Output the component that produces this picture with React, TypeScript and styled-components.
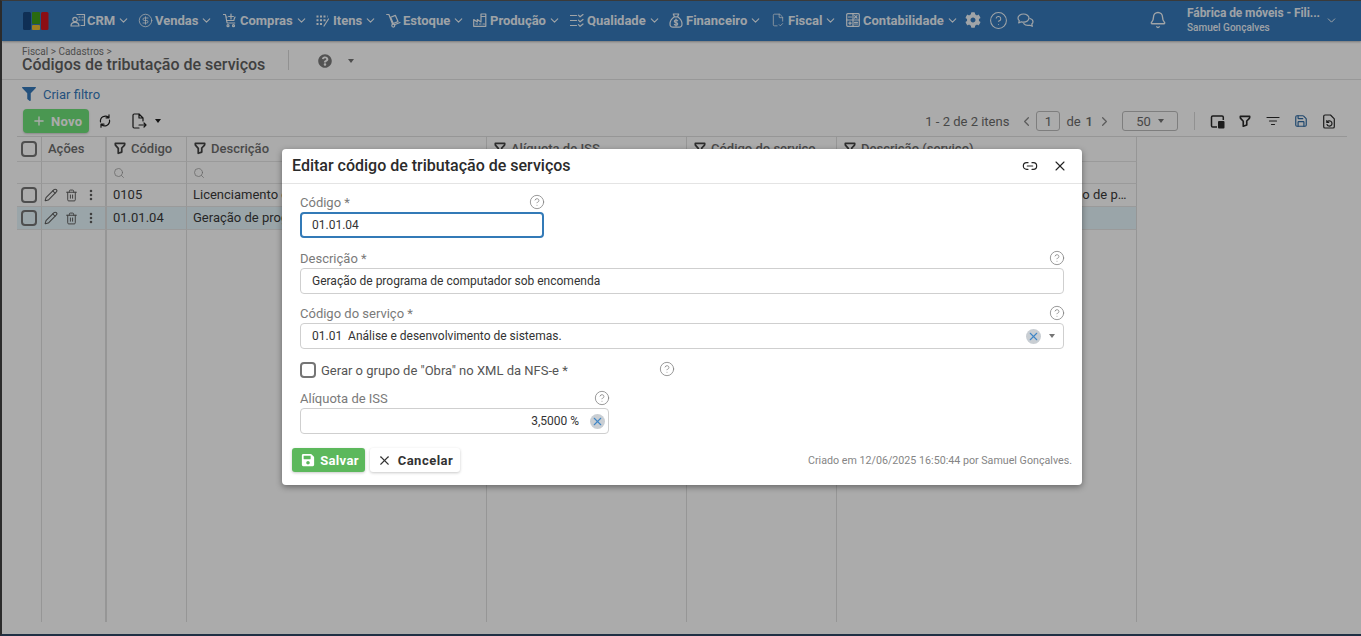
import React from "react";
import styled, { createGlobalStyle } from "styled-components";
import {
  Bell, ChevronDown, ChevronLeft, ChevronRight, CircleDollarSign, CircleHelp,
  FileCheck2, Link2, MoreVertical, Pencil, Save, Search, Trash2, X, Plus,
} from "lucide-react";
import { FaCog, FaFilter, FaQuestionCircle, FaSave } from "react-icons/fa";
import { TbFilter } from "react-icons/tb";

const Global = createGlobalStyle`
  html, body { margin: 0; padding: 0; height: 100%; overflow: hidden; background: #fff; }
  body { font-family: Roboto, "Liberation Sans", sans-serif; }
  * { box-sizing: border-box; }
`;

const Frame = styled.div`
  position: relative;
  width: 1361px;
  height: 636px;
  display: flex;
  flex-direction: column;
  border-top: 1px solid #3a3a3a;
  border-left: 2px solid #2b2b2b;
  border-bottom: 2px solid #1f3044;
  background: #fff;
  overflow: hidden;
`;

const Nav = styled.header`
  height: 40px;
  flex: none;
  display: flex;
  align-items: center;
  background: #367abb;
  box-shadow: 0 1px 2px rgba(0, 0, 0, 0.3);
  color: rgba(255, 255, 255, 0.92);
  padding: 0 0 2px 21px;
`;

const Logo = styled.svg`
  width: 26px;
  height: 20px;
  flex: none;
  margin: 2px 21px 0 0;
`;

const NavItem = styled.div<{ $w: number }>`
  width: ${(p) => p.$w}px;
  flex: none;
  display: flex;
  align-items: center;
  font-size: 13px;
  font-weight: 700;
  white-space: nowrap;
`;

const NavIconSlot = styled.span`
  width: 17px;
  flex: none;
  display: flex;
  align-items: center;
`;

const NavChevron = styled(ChevronDown)`
  margin-left: 2px;
  flex: none;
`;

const NavIconBtn = styled.div<{ $w: number }>`
  width: ${(p) => p.$w}px;
  flex: none;
  display: flex;
  align-items: center;
`;

const NavHelp = styled(CircleHelp)`
  margin-left: -2px;
  flex: none;
`;

const Tenant = styled.div`
  margin-left: 115px;
  flex: none;
  display: flex;
  align-items: center;
`;

const BellWrap = styled.div`
  width: 38px;
  flex: none;
  display: flex;
`;

const User = styled.div`
  width: 138px;
  flex: none;
  display: flex;
  flex-direction: column;
  gap: 2px;
`;

const UserCompany = styled.div`
  font-size: 12px;
  font-weight: 700;
  line-height: 14px;
  letter-spacing: -0.08px;
  white-space: nowrap;
`;

const UserName = styled.div`
  font-size: 10px;
  font-weight: 500;
  line-height: 12px;
`;

const PageHead = styled.div`
  height: 39px;
  flex: none;
  display: flex;
  align-items: center;
  padding-left: 20px;
  border-bottom: 1px solid #e3e3e3;
`;

const TitleBlock = styled.div`
  width: 266px;
  flex: none;
`;

const Crumbs = styled.div`
  font-size: 10px;
  line-height: 10px;
  color: #757575;
`;

const PageTitle = styled.h1`
  margin: 0;
  font-size: 16px;
  font-weight: 500;
  line-height: 16px;
  color: #606060;
  white-space: nowrap;
`;

const VSep = styled.div<{ $h: number; $mx: number }>`
  width: 1px;
  height: ${(p) => p.$h}px;
  flex: none;
  margin: 0 ${(p) => p.$mx}px;
  background: #d8d8d8;
`;

const Caret = styled.span<{ $c?: string }>`
  display: inline-block;
  width: 0;
  height: 0;
  flex: none;
  border-left: 3.5px solid transparent;
  border-right: 3.5px solid transparent;
  border-top: 4px solid ${(p) => p.$c ?? "#757575"};
`;

const SelectCaret = styled(Caret)`
  margin: 0 -3px 0 8px;
`;

const HeadHelp = styled.div`
  display: flex;
  align-items: center;
  gap: 16px;
  color: #7d7d7d;
  margin: 2px 0 0 29px;
`;

const FilterRow = styled.div`
  height: 18px;
  margin-top: 5px;
  flex: none;
  display: flex;
  align-items: center;
  gap: 7px;
  padding-left: 20px;
  font-size: 13px;
  color: #367abb;
`;

const Toolbar = styled.div`
  height: 24px;
  margin-top: 6px;
  flex: none;
  display: flex;
  align-items: center;
  padding-left: 21px;
`;

const NewButton = styled.div`
  width: 66px;
  height: 24px;
  flex: none;
  border-radius: 4px;
  background: #6fe27a;
  color: #fff;
  display: flex;
  align-items: center;
  padding-left: 9px;
  gap: 5px;
  font-size: 13px;
  font-weight: 700;
  letter-spacing: 0.3px;
  box-shadow: 0 1px 2px rgba(0, 0, 0, 0.2);
`;

const ToolIcon = styled.div<{ $ml: number }>`
  margin-left: ${(p) => p.$ml}px;
  display: flex;
  align-items: center;
  gap: 8px;
  flex: none;
  color: #1f1f1f;
`;

const Pager = styled.div`
  margin-left: auto;
  padding-right: 25px;
  display: flex;
  align-items: center;
  font-size: 13px;
  color: #6b6b6b;
`;

const PagerText = styled.span<{ $ml?: number; $strong?: boolean }>`
  margin-left: ${(p) => p.$ml ?? 0}px;
  font-weight: ${(p) => (p.$strong ? 500 : 400)};
  white-space: nowrap;
`;

const PagerBox = styled.div<{ $w: number; $ml: number }>`
  width: ${(p) => p.$w}px;
  height: 20px;
  margin-left: ${(p) => p.$ml}px;
  border: 1px solid #bdbdbd;
  border-radius: 3px;
  display: flex;
  align-items: center;
  justify-content: center;
  gap: 7px;
  flex: none;
`;

const PagerIcon = styled.div<{ $ml: number; $c?: string }>`
  margin-left: ${(p) => p.$ml}px;
  display: flex;
  flex: none;
  color: ${(p) => p.$c ?? "#2a2a2a"};
`;

const TableArea = styled.div`
  margin: 3px 14px 0 15px;
  flex: 1;
  min-height: 0;
  border-top: 1px solid #e0e0e0;
  display: flex;
  flex-direction: column;
  padding-bottom: 12px;
`;

const Row = styled.div<{ $h?: number; $selected?: boolean }>`
  width: 1120px;
  flex: ${(p) => (p.$h ? "none" : "1")};
  height: ${(p) => (p.$h ? `${p.$h}px` : "auto")};
  display: grid;
  grid-template-columns: 25px 65px 80px 300px 200px 150px 300px;
  background: ${(p) => (p.$selected ? "#e6f6fc" : "transparent")};
`;

const Cell = styled.div<{ $lined?: boolean; $heavy?: boolean; $head?: boolean }>`
  min-width: 0;
  display: flex;
  align-items: center;
  gap: 4px;
  padding: 0 6px 2px;
  font-size: 13px;
  color: ${(p) => (p.$head ? "#6e6e6e" : "#3a3a3a")};
  font-weight: ${(p) => (p.$head ? 500 : 400)};
  border-right: ${(p) => (p.$heavy ? "2px" : "1px")} solid #e0e0e0;
  border-bottom: ${(p) => (p.$lined ? "1px solid #e6e6e6" : "none")};
  white-space: nowrap;
  overflow: hidden;
`;

const CheckCell = styled(Cell)`
  padding: 0 0 0 4px;
`;

const SearchCell = styled(Cell)`
  padding: 0 6px;
`;

const ActionCell = styled(Cell)`
  padding: 0 0 0 2px;
  gap: 7px;
  color: #5e5e5e;
`;

const RowMenu = styled(MoreVertical)`
  margin-left: -1px;
  flex: none;
`;

const Ellipsis = styled.span`
  overflow: hidden;
  text-overflow: ellipsis;
`;

const Check = styled.span<{ $clear?: boolean }>`
  display: block;
  width: 16px;
  height: 16px;
  flex: none;
  border: 2px solid #757575;
  border-radius: 4px;
  background: ${(p) => (p.$clear ? "transparent" : "#fff")};
`;

const Overlay = styled.div`
  position: absolute;
  inset: 0;
  background: rgba(0, 0, 0, 0.33);
  padding: 148px 0 0 280px;
`;

const Modal = styled.section`
  width: 800px;
  height: 336px;
  background: #fff;
  border-radius: 4px;
  box-shadow: 0 2px 6px rgba(0, 0, 0, 0.4);
  display: flex;
  flex-direction: column;
`;

const ModalHead = styled.div`
  height: 35px;
  flex: none;
  display: flex;
  align-items: center;
  padding: 0 14px 0 10px;
  border-bottom: 1px solid #e4e4e4;
`;

const ModalTitle = styled.h2`
  margin: 0 0 2px;
  flex: 1;
  font-size: 16px;
  font-weight: 500;
  color: #2b2b2b;
`;

const HeadActions = styled.div`
  display: flex;
  align-items: center;
  gap: 14px;
  color: #222;
`;

const ModalBody = styled.div`
  flex: 1;
  padding: 10px 18px 0;
  display: flex;
  flex-direction: column;
`;

const Field = styled.div<{ $w?: number; $mt?: number }>`
  width: ${(p) => (p.$w ? `${p.$w}px` : "100%")};
  margin-top: ${(p) => p.$mt ?? 0}px;
`;

const LabelRow = styled.div`
  height: 18px;
  padding-bottom: 2px;
  display: flex;
  align-items: center;
  justify-content: space-between;
  font-size: 13px;
  color: #7a7a7a;
`;

const Help = styled(CircleHelp)`
  color: #808080;
  flex: none;
  margin-right: -1px;
`;

const CheckHelp = styled(Help)`
  margin-top: -3px;
`;

const InputBox = styled.div<{ $focus?: boolean; $end?: boolean }>`
  height: 26px;
  display: flex;
  align-items: center;
  justify-content: ${(p) => (p.$end ? "flex-end" : "flex-start")};
  padding: ${(p) => (p.$focus ? "0 10px" : p.$end ? "0 3px 0 11px" : "0 11px")};
  font-size: 12px;
  color: #333;
  border: ${(p) => (p.$focus ? "2px solid #337ab7" : "1px solid #cfcfcf")};
  border-radius: 4px;
  white-space: pre;
`;

const Grow = styled.span`
  flex: 1;
`;

const ClearBadge = styled.span<{ $ml?: number }>`
  width: 15px;
  height: 15px;
  margin-left: ${(p) => p.$ml ?? 0}px;
  flex: none;
  border-radius: 50%;
  background: #c9ced3;
  color: #3f86c6;
  display: flex;
  align-items: center;
  justify-content: center;
`;

const CheckRow = styled.div`
  width: 374px;
  height: 20px;
  margin-top: 11px;
  display: flex;
  align-items: center;
  justify-content: space-between;
  font-size: 13px;
  color: #555;
`;

const CheckLabel = styled.label`
  display: flex;
  align-items: center;
  gap: 5px;
`;

const ModalFoot = styled.div`
  height: 24px;
  margin-bottom: 13px;
  flex: none;
  display: flex;
  align-items: center;
  padding: 0 10px;
`;

const Btn = styled.button<{ $primary?: boolean; $w: number }>`
  width: ${(p) => p.$w}px;
  height: 24px;
  padding: 0 0 0 ${(p) => (p.$primary ? 3 : 0)}px;
  border: 0;
  border-radius: 3px;
  margin-right: 5px;
  display: flex;
  align-items: center;
  justify-content: center;
  gap: ${(p) => (p.$primary ? 5 : 6)}px;
  font: 700 13px Roboto, sans-serif;
  letter-spacing: ${(p) => (p.$primary ? 0.35 : 0.5)}px;
  color: ${(p) => (p.$primary ? "#fff" : "#333")};
  background: ${(p) => (p.$primary ? "#5cb85c" : "#fff")};
  box-shadow: 0 1px 3px rgba(0, 0, 0, 0.22);
`;

const Created = styled.div`
  margin-left: auto;
  font-size: 10.7px;
  color: #858585;
`;

const SearchIcon = styled(Search)`
  color: #9a9a9a;
  flex: none;
`;

/* ---------- drawn icons ---------- */
const IconSvg = styled.svg`
  fill: none;
  stroke: currentColor;
  stroke-width: 1.2;
  stroke-linecap: round;
  stroke-linejoin: round;
  flex: none;
`;

const CrmIcon = () => (
  <IconSvg width="16" height="16" viewBox="0 0 16 16">
    <path d="M7 2.5h7.5v11H11M9 5h1M12 5h1M9 8h1M12 8h1" />
    <circle cx="5" cy="7.5" r="2.2" />
    <path d="M1 14c0-2.5 1.5-3.6 4-3.6s4 1.1 4 3.6z" />
  </IconSvg>
);
const CartIcon = () => (
  <IconSvg width="14" height="15" viewBox="0 0 14 15">
    <path d="M.5 1.5h2l1.6 8.5h7.6M3 4h1M11 6.5 12 4M8 1v5M5.6 3.5h4.8" />
    <path d="M3.6 7.5 11 7.5" />
    <circle cx="5" cy="12.7" r="1" />
    <circle cx="10.5" cy="12.7" r="1" />
  </IconSvg>
);
const ItemsIcon = () => (
  <IconSvg width="13" height="13" viewBox="0 0 13 13">
    <path d="M.5 2.5h11M.5 6.2h9M.5 10h7" strokeWidth="2" strokeLinecap="butt" strokeDasharray="2 1.5" />
    <path d="M12.5 5 8 12" />
  </IconSvg>
);
const TruckIcon = () => (
  <IconSvg width="15" height="15" viewBox="0 0 15 15">
    <path d="M.7 1.5h2.2l3.6 9.6M14 9.5l-5.6 2.2" />
    <path d="M4.6 4.3 9.4 2.4l2.6 6.2-4.8 1.9z" />
    <circle cx="7.3" cy="12.6" r="1.5" />
  </IconSvg>
);
const FactoryIcon = () => (
  <IconSvg width="14" height="14" viewBox="0 0 14 14">
    <path d="M.7 13.3V6.6l3.6 2.4V6.6L8 9V1h4.8v12.3zM8 3.5h4.8" />
    <path d="M3 11h1.5M6.5 11H8M10 11h1.5" />
  </IconSvg>
);
const QualityIcon = () => (
  <IconSvg width="14" height="13" viewBox="0 0 14 13">
    <path d="M.5 1.5h6M.5 6.5h6M.5 11.5h6M8.5 1.2l1.6 1.6L13 0.5M8.5 6.2l1.6 1.6L13 5.5M8.5 10.7l1.6 1.6L13 10" />
  </IconSvg>
);
const BagIcon = () => (
  <IconSvg width="14" height="15" viewBox="0 0 14 15">
    <path d="M4.3 1h5.4L8.6 3.8H5.4zM5.4 3.8C2.5 5.8 1 8.4 1 11c0 2 1.4 3.2 3 3.2h6c1.6 0 3-1.2 3-3.2 0-2.6-1.5-5.2-4.4-7.2" />
    <path d="M8.6 7.8c-.3-.5-.9-.8-1.6-.8-1 0-1.7.5-1.7 1.3 0 1.7 3.4.9 3.4 2.6 0 .8-.7 1.3-1.7 1.3-.7 0-1.3-.3-1.6-.8M7 6v7" />
  </IconSvg>
);
const CalcIcon = () => (
  <IconSvg width="14" height="14" viewBox="0 0 14 14">
    <rect x=".7" y=".7" width="12.6" height="12.6" rx="1" />
    <path d="M.7 7h12.6M7 .7v12.6M2.5 4h3M8.6 2.6l2.4 2.4M11 2.6 8.6 5M4 8.8v2.6M2.7 10.1h2.6M8.5 9.3h3M8.5 11h3" />
  </IconSvg>
);
const ChatIcon = () => (
  <IconSvg width="17" height="15" viewBox="0 0 17 15">
    <path d="M6.5 1C3.5 1 1 2.8 1 5c0 1 .5 1.9 1.3 2.6L1.7 10l2.6-1.2c.7.2 1.4.3 2.2.3 3 0 5.5-1.8 5.5-4S9.5 1 6.5 1z" />
    <path d="M13 5.5c1.8.6 3 1.8 3 3.2 0 .9-.5 1.7-1.2 2.3l.5 2.3-2.4-1.1c-.6.2-1.2.2-1.9.2-1.8 0-3.4-.7-4.2-1.8" />
  </IconSvg>
);
const SyncIcon = () => (
  <IconSvg width="14" height="14" viewBox="0 0 14 14" strokeWidth="1.6">
    <path d="M10.5 3.2A5 5 0 0 0 2.5 8M11 .8v3H8" />
    <path d="M3.5 10.8A5 5 0 0 0 11.5 6M3 13.2v-3h3" />
  </IconSvg>
);
const ExportIcon = () => (
  <IconSvg width="16" height="16" viewBox="0 0 16 16" strokeWidth="1.5">
    <path d="M8 1H3.2C2.4 1 2 1.5 2 2.2v11.6c0 .7.4 1.2 1.2 1.2H8M8 1l4 4v3M8 1v4h4" />
    <path d="M8 12h7M13 10l2 2-2 2" />
  </IconSvg>
);
const ColumnsIcon = () => (
  <svg width="15" height="15" viewBox="0 0 15 15">
    <path d="M12 2H2.8C2 2 1.5 2.5 1.5 3.3v8.4c0 .8.5 1.3 1.3 1.3H7" fill="none" stroke="currentColor" strokeWidth="1.5" />
    <path d="M12 2c.8 0 1.3.5 1.3 1.3V6" fill="none" stroke="currentColor" strokeWidth="1.5" />
    <rect x="8" y="7" width="6.5" height="7.5" rx="1" fill="currentColor" />
  </svg>
);
const FileRefreshIcon = () => (
  <IconSvg width="14" height="15" viewBox="0 0 14 15" strokeWidth="1.4">
    <path d="M8.5 1H3c-.8 0-1.3.5-1.3 1.3v10.4c0 .8.5 1.3 1.3 1.3h8c.8 0 1.3-.5 1.3-1.3V4.8z" />
    <path d="M4.8 6.5v2h2M5 8.4A2.6 2.6 0 1 1 5 10.5" />
  </IconSvg>
);
const FilterLines = () => (
  <IconSvg width="14" height="14" viewBox="0 0 14 14" strokeWidth="1.5">
    <path d="M1 3.5h12M3.5 7h7M5.5 10.5h3" />
  </IconSvg>
);
const FilterSmall = () => <TbFilter size={14} strokeWidth={3} color="#444" />;
const FieldHelp = () => <Help size={16} strokeWidth={1.2} />;

const navItems: { w: number; label: string; icon: React.ReactNode }[] = [
  { w: 68, label: "CRM", icon: <CrmIcon /> },
  { w: 85, label: "Vendas", icon: <CircleDollarSign size={15} strokeWidth={1.3} /> },
  { w: 93, label: "Compras", icon: <CartIcon /> },
  { w: 70, label: "Itens", icon: <ItemsIcon /> },
  { w: 87, label: "Estoque", icon: <TruckIcon /> },
  { w: 97, label: "Produção", icon: <FactoryIcon /> },
  { w: 99, label: "Qualidade", icon: <QualityIcon /> },
  { w: 102, label: "Financeiro", icon: <BagIcon /> },
  { w: 75, label: "Fiscal", icon: <FileCheck2 size={14} strokeWidth={1.3} /> },
  { w: 119, label: "Contabilidade", icon: <CalcIcon /> },
];

const columns = ["Código", "Descrição", "Alíquota de ISS", "Código do serviço", "Descrição (serviço)"];

const rows = [
  {
    code: "0105",
    desc: "Licenciamento ou cessão de direito de uso de programas de computação",
    rate: "3,5000 %",
    svc: "01.05",
    svcDesc: "Licenciamento ou cessão de direito de uso de programas de computação",
  },
  {
    code: "01.01.04",
    desc: "Geração de programa de computador sob encomenda",
    rate: "3,5000 %",
    svc: "01.01",
    svcDesc: "Análise e desenvolvimento de sistemas.",
  },
];

export default function App() {
  return (
    <>
      <Global />
      <Frame>
        <Nav>
          <Logo viewBox="0 0 26 20">
            <rect x="0" y="1" width="8" height="18" rx="1.5" fill="#17467f" />
            <rect x="9" y="1" width="8" height="12" rx="1" fill="#3f9e18" />
            <rect x="9" y="14" width="8" height="5" rx="1" fill="#efbf30" />
            <rect x="18" y="1" width="7.5" height="18" rx="1.5" fill="#d1161e" />
          </Logo>
          {navItems.map((n) => (
            <NavItem key={n.label} $w={n.w}>
              <NavIconSlot>{n.icon}</NavIconSlot>
              <span>{n.label}</span>
              <NavChevron size={13} strokeWidth={2} />
            </NavItem>
          ))}
          <NavIconBtn $w={26}><FaCog size={16} /></NavIconBtn>
          <NavIconBtn $w={26}><NavHelp size={19} strokeWidth={1.3} /></NavIconBtn>
          <NavIconBtn $w={17}><ChatIcon /></NavIconBtn>
          <Tenant>
            <BellWrap><Bell size={18} strokeWidth={1.8} /></BellWrap>
            <User>
              <UserCompany>Fábrica de móveis - Fili...</UserCompany>
              <UserName>Samuel Gonçalves</UserName>
            </User>
            <ChevronDown size={13} strokeWidth={1.8} />
          </Tenant>
        </Nav>

        <PageHead>
          <TitleBlock>
            <Crumbs>Fiscal &gt; Cadastros &gt;</Crumbs>
            <PageTitle>Códigos de tributação de serviços</PageTitle>
          </TitleBlock>
          <VSep $h={20} $mx={0} />
          <HeadHelp>
            <FaQuestionCircle size={14} />
            <Caret />
          </HeadHelp>
        </PageHead>

        <FilterRow>
          <FaFilter size={14} />
          <span>Criar filtro</span>
        </FilterRow>

        <Toolbar>
          <NewButton>
            <Plus size={14} strokeWidth={2.4} />
            <span>Novo</span>
          </NewButton>
          <ToolIcon $ml={9}><SyncIcon /></ToolIcon>
          <ToolIcon $ml={19}>
            <ExportIcon />
            <Caret $c="#1f1f1f" />
          </ToolIcon>
          <Pager>
            <PagerText>1 - 2 de 2 itens</PagerText>
            <PagerIcon $ml={10} $c="#8a8a8a"><ChevronLeft size={15} /></PagerIcon>
            <PagerBox $w={24} $ml={2}>1</PagerBox>
            <PagerText $ml={6}>de</PagerText>
            <PagerText $ml={5} $strong>1</PagerText>
            <PagerIcon $ml={4} $c="#8a8a8a"><ChevronRight size={15} /></PagerIcon>
            <PagerBox $w={56} $ml={10}>
              <span>50</span>
              <Caret />
            </PagerBox>
            <VSep $h={18} $mx={16} />
            <PagerIcon $ml={-1}><ColumnsIcon /></PagerIcon>
            <PagerIcon $ml={13}><TbFilter size={14} strokeWidth={2.8} /></PagerIcon>
            <PagerIcon $ml={14}><FilterLines /></PagerIcon>
            <PagerIcon $ml={14} $c="#2d6aa3"><Save size={14} strokeWidth={2} /></PagerIcon>
            <PagerIcon $ml={14}><FileRefreshIcon /></PagerIcon>
          </Pager>
        </Toolbar>

        <TableArea>
          <Row $h={25}>
            <CheckCell $lined><Check $clear /></CheckCell>
            <Cell $lined $heavy $head>Ações</Cell>
            {columns.map((c) => (
              <Cell key={c} $lined $head><FilterSmall />{c}</Cell>
            ))}
          </Row>
          <Row $h={22}>
            <Cell $lined />
            <Cell $lined $heavy />
            {columns.map((c) => (
              <SearchCell key={c} $lined><SearchIcon size={12} strokeWidth={1.5} /></SearchCell>
            ))}
          </Row>
          {rows.map((r, i) => (
            <Row key={r.code} $h={23} $selected={i === 1}>
              <CheckCell $lined><Check $clear={i === 1} /></CheckCell>
              <ActionCell $lined $heavy>
                <Pencil size={14} strokeWidth={1.8} />
                <Trash2 size={13} strokeWidth={1.8} />
                <RowMenu size={14} strokeWidth={2.4} />
              </ActionCell>
              <Cell $lined>{r.code}</Cell>
              <Cell $lined><Ellipsis>{r.desc}</Ellipsis></Cell>
              <Cell $lined>{r.rate}</Cell>
              <Cell $lined>{r.svc}</Cell>
              <Cell $lined><Ellipsis>{r.svcDesc}</Ellipsis></Cell>
            </Row>
          ))}
          <Row>
            <Cell />
            <Cell $heavy />
            {columns.map((c) => <Cell key={c} />)}
          </Row>
        </TableArea>

        <Overlay>
          <Modal>
            <ModalHead>
              <ModalTitle>Editar código de tributação de serviços</ModalTitle>
              <HeadActions>
                <Link2 size={16} strokeWidth={1.8} />
                <X size={16} strokeWidth={1.6} />
              </HeadActions>
            </ModalHead>
            <ModalBody>
              <Field $w={244}>
                <LabelRow>Código *<FieldHelp /></LabelRow>
                <InputBox $focus>01.01.04</InputBox>
              </Field>
              <Field $mt={12}>
                <LabelRow>Descrição *<FieldHelp /></LabelRow>
                <InputBox>Geração de programa de computador sob encomenda</InputBox>
              </Field>
              <Field $mt={11}>
                <LabelRow>Código do serviço *<FieldHelp /></LabelRow>
                <InputBox>
                  <Grow>01.01  Análise e desenvolvimento de sistemas.</Grow>
                  <ClearBadge><X size={13} strokeWidth={2} /></ClearBadge>
                  <SelectCaret />
                </InputBox>
              </Field>
              <CheckRow>
                <CheckLabel><Check />Gerar o grupo de "Obra" no XML da NFS-e *</CheckLabel>
                <CheckHelp size={16} strokeWidth={1.2} />
              </CheckRow>
              <Field $w={309} $mt={10}>
                <LabelRow>Alíquota de ISS<FieldHelp /></LabelRow>
                <InputBox $end>
                  <span>3,5000 %</span>
                  <ClearBadge $ml={11}><X size={13} strokeWidth={2} /></ClearBadge>
                </InputBox>
              </Field>
            </ModalBody>
            <ModalFoot>
              <Btn $primary $w={73}><FaSave size={14} />Salvar</Btn>
              <Btn $w={90}><X size={15} strokeWidth={1.8} />Cancelar</Btn>
              <Created>Criado em 12/06/2025 16:50:44 por Samuel Gonçalves.</Created>
            </ModalFoot>
          </Modal>
        </Overlay>
      </Frame>
    </>
  );
}
